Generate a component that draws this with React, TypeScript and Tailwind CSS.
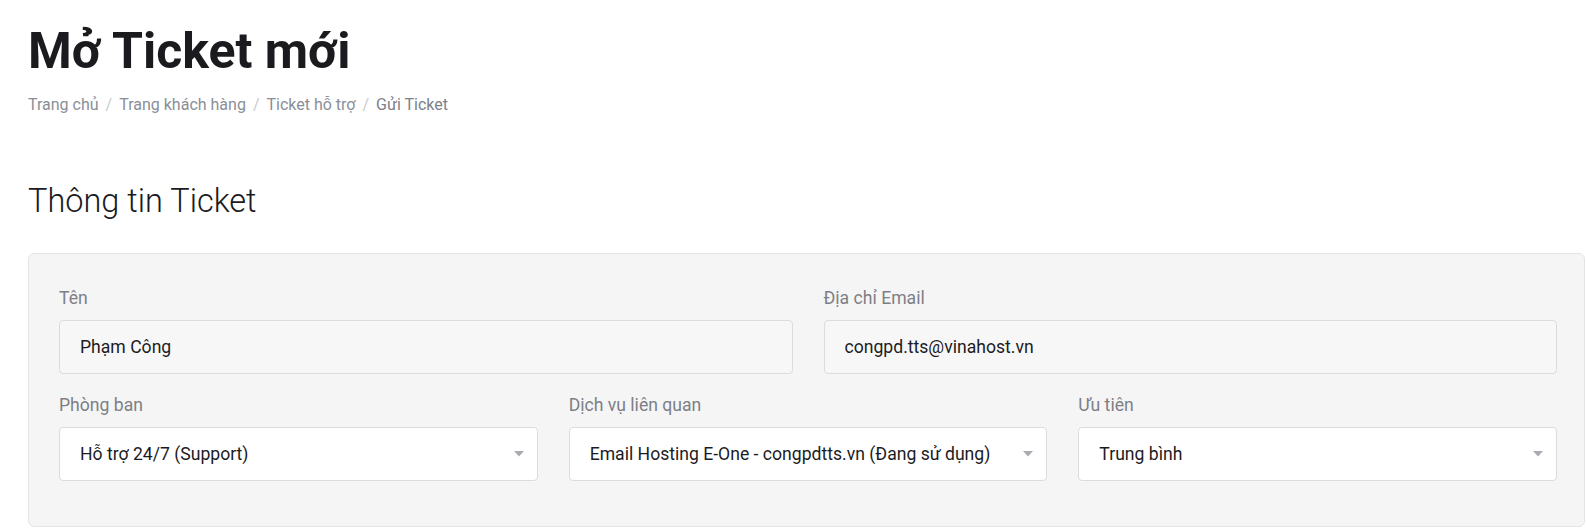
import { ReactNode } from "react";

const crumbs = ["Trang chủ", "Trang khách hàng", "Ticket hỗ trợ", "Gửi Ticket"];

const Field = (props: { label: string; children: ReactNode }) => {
  const { label, children } = props;
  return (
    <div className="flex flex-col">
      <label className="text-[17.6px] leading-6 text-[#7d7f86] mb-[10px]">{label}</label>
      {children}
    </div>
  );
};

const TextBox = (props: { value: string }) => (
  <div className="h-[54px] flex items-center px-5 border border-[#dcdcdc] rounded-[4px] bg-[#f7f7f7] text-[17.6px] text-[#1c1c1f]">
    {props.value}
  </div>
);

const SelectBox = (props: { value: string }) => (
  <div className="h-[54px] flex items-center justify-between pl-5 pr-[13px] border border-[#dcdcdc] rounded-[4px] bg-white text-[17.6px] text-[#1c1c1f]">
    <span className="truncate">{props.value}</span>
    <svg width="10" height="6" viewBox="0 0 10 6" className="shrink-0 ml-3">
      <path d="M0 0h10L5 5.5z" fill="#a9abb1" />
    </svg>
  </div>
);

export default function App() {
  return (
    <div className="min-h-screen bg-white pl-[28px] pt-[21px] font-['Roboto','Liberation_Sans',sans-serif]">
      <h1 className="text-[50px] font-bold leading-[60px] text-[#1b1b1f]">Mở Ticket mới</h1>
      <nav className="mt-[14px] flex items-center text-[16px] leading-5 text-[#8a8e98]">
        {crumbs.map((c, idx) => (
          <span key={idx} className="flex items-center">
            {idx > 0 && <span className="mx-[7px] text-[#c9cbd0]">/</span>}
            <span className={idx === crumbs.length - 1 ? "text-[#7d8088]" : ""}>{c}</span>
          </span>
        ))}
      </nav>
      <h2 className="mt-[66px] text-[32.5px] font-light leading-10 text-[#1a1a22]">Thông tin Ticket</h2>
      <div className="mt-[32px] mr-[1px] border border-[#e4e4e4] rounded-[6px] bg-[#f5f5f5] pt-[32px] pb-[45px] pl-[30px] pr-[27px]">
        <div className="grid grid-cols-2 gap-x-[31px]">
          <Field label="Tên">
            <TextBox value="Phạm Công" />
          </Field>
          <Field label="Địa chỉ Email">
            <TextBox value="congpd.tts@vinahost.vn" />
          </Field>
        </div>
        <div className="grid grid-cols-3 gap-x-[31px] mt-[19px]">
          <Field label="Phòng ban">
            <SelectBox value="Hỗ trợ 24/7 (Support)" />
          </Field>
          <Field label="Dịch vụ liên quan">
            <SelectBox value="Email Hosting E-One - congpdtts.vn (Đang sử dụng)" />
          </Field>
          <Field label="Ưu tiên">
            <SelectBox value="Trung bình" />
          </Field>
        </div>
      </div>
    </div>
  );
}
